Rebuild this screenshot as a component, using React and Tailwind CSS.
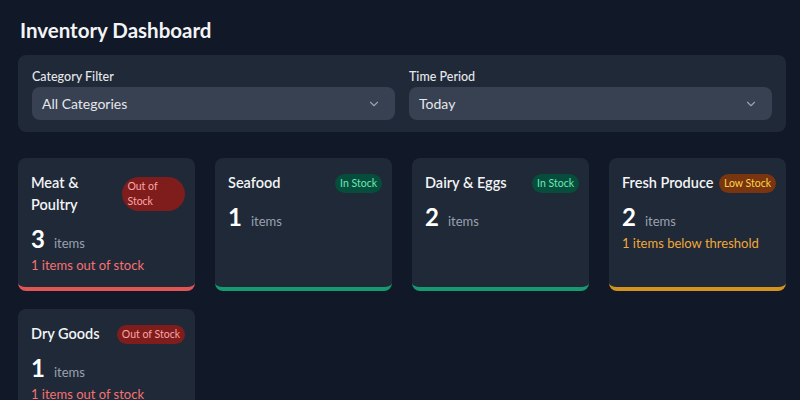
import { ChevronDown } from 'lucide-react'

const categories = [
  { name: 'Meat & Poultry', count: 3, status: 'out', note: '1 items out of stock' },
  { name: 'Seafood', count: 1, status: 'in' },
  { name: 'Dairy & Eggs', count: 2, status: 'in' },
  { name: 'Fresh Produce', count: 2, status: 'low', note: '1 items below threshold' },
  { name: 'Dry Goods', count: 1, status: 'out', note: '1 items out of stock' },
]

const styles = {
  out: {
    label: 'Out of Stock',
    badge: 'bg-[#7f1d1d] text-[#fca5a5]',
    bar: 'border-[#e25555]',
    note: 'text-[#f87171]',
  },
  in: {
    label: 'In Stock',
    badge: 'bg-[#064e3b] text-[#6ee7b7]',
    bar: 'border-[#169a70]',
    note: 'text-[#6ee7b7]',
  },
  low: {
    label: 'Low Stock',
    badge: 'bg-[#78350f] text-[#fcd34d]',
    bar: 'border-[#d4921f]',
    note: 'text-[#f0a83a]',
  },
}

function Select({ label, value }) {
  return (
    <div className="flex-1">
      <label className="block text-[12.5px] leading-4 font-medium text-gray-200 mb-0.5">{label}</label>
      <div className="h-[33px] rounded-lg bg-[#374151] flex items-center justify-between pl-2.5 pr-3.5">
        <span className="text-sm text-gray-200">{value}</span>
        <ChevronDown className="w-3.5 h-3.5 text-gray-400" strokeWidth={2} />
      </div>
    </div>
  )
}

function CategoryCard({ item }) {
  const s = styles[item.status]
  return (
    <div className={`bg-[#1f2937] rounded-lg border-b-4 ${s.bar} pl-[13px] pr-[10px] pt-[14px] pb-3`}>
      <div className="flex items-center justify-between gap-[3px]">
        <h3 className="text-[14.5px] leading-[22px] font-semibold text-gray-100">{item.name}</h3>
        <span className={`rounded-full px-[5px] py-[2px] text-[10.5px] leading-[15px] ${s.badge}`}>{s.label}</span>
      </div>
      <div className="mt-[7px] flex items-baseline gap-[9px]">
        <span className="text-2xl leading-8 font-bold text-white">{item.count}</span>
        <span className="text-[13px] text-gray-400">items</span>
      </div>
      {item.note && <p className={`text-[13px] leading-5 ${s.note}`}>{item.note}</p>}
    </div>
  )
}

export default function App() {
  return (
    <div className="min-h-screen bg-[#111827] text-white" style={{ fontFamily: 'Lato, "Noto Sans", sans-serif' }}>
      <div className="w-[768px] ml-[18px] pt-4 pb-6">
        <h1 className="text-[20.5px] leading-7 font-bold text-gray-100 ml-0.5 mb-[11px]">Inventory Dashboard</h1>

        <div className="bg-[#1f2937] rounded-lg px-[14px] pt-[14px] pb-3 flex gap-[14px]">
          <Select label="Category Filter" value="All Categories" />
          <Select label="Time Period" value="Today" />
        </div>

        <div className="mt-[26px] grid grid-cols-4 gap-x-5 gap-y-[18px]">
          {categories.map((c) => (
            <CategoryCard key={c.name} item={c} />
          ))}
        </div>
      </div>
    </div>
  )
}
